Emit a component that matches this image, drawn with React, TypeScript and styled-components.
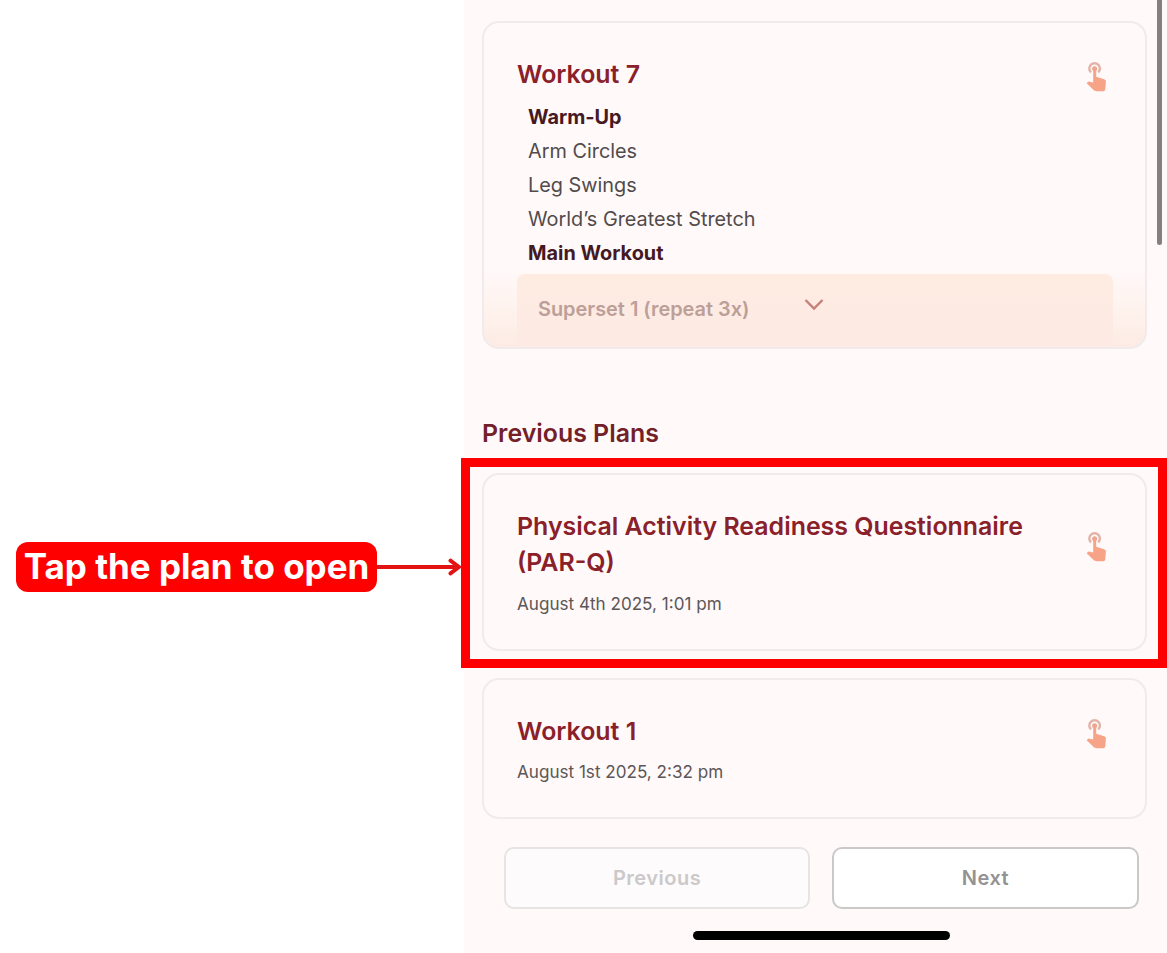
import type { ReactNode } from 'react';

import styled, { createGlobalStyle } from 'styled-components';

const exercises = ['Arm Circles', 'Leg Swings', 'World’s Greatest Stretch'];

const TouchIcon = () => (
  <svg width="24" height="34" viewBox="0 0 24 34" fill="none">
    <path
      d="M6 12.4A5.3 5.3 0 1 1 13.2 12.4"
      stroke="#e2b3a6"
      strokeWidth="2.4"
    />
    <circle cx="9.6" cy="8.8" r="2.5" fill="#e5a593" />
    <path
      d="M8.2 8.5c0-1 .6-1.6 1.5-1.6s1.5.6 1.5 1.6v8.2l8 2.6c1.2.4 1.8 1.2 1.7 2.4l-.6 7.2c-.2 1.6-1 2.4-2.5 2.4h-6.3c-1.2 0-2-.4-2.8-1.2L1.6 23.2l1-1c.6-.6 1.3-.7 2.1-.5l3.5.9z"
      fill="#f7a388"
    />
  </svg>
);

type PlanCardProps = {
  title: ReactNode;
  date: string;
  height: number;
  dateGap: number;
  iconOffset: number;
};

const PlanCard = ({
  title,
  date,
  height,
  dateGap,
  iconOffset,
}: PlanCardProps) => (
  <Card $height={height}>
    <CardContent>
      <CardTitle>{title}</CardTitle>
      <PlanDate $gap={dateGap}>{date}</PlanDate>
    </CardContent>
    <IconSlot $offset={iconOffset}>
      <TouchIcon />
    </IconSlot>
  </Card>
);

const App = () => {
  return (
    <Page>
      <GlobalStyle />
      <Annotation>
        <Callout>Tap the plan to open</Callout>
        <Arrow width="84" height="18" viewBox="0 0 84 18" fill="none">
          <path
            d="M0 9H82M73.5 2.7L82 9L73.5 15.3"
            stroke="#e31313"
            strokeWidth="4"
            strokeLinecap="round"
            strokeLinejoin="round"
          />
        </Arrow>
      </Annotation>
      <Screen>
        <ScrollThumb />
        <Card $height={328} $faded>
          <CardContent>
            <CardTitle>Workout 7</CardTitle>
            <ExerciseList>
              <SectionName>Warm-Up</SectionName>
              {exercises.map((name) => (
                <Exercise key={name}>{name}</Exercise>
              ))}
              <SectionName>Main Workout</SectionName>
            </ExerciseList>
            <Superset>
              <span>Superset 1 (repeat 3x)</span>
              <Chevron width="22" height="14" viewBox="0 0 22 14" fill="none">
                <path
                  d="M2.5 2L11 10.5L19.5 2"
                  stroke="#c58078"
                  strokeWidth="2.4"
                />
              </Chevron>
            </Superset>
          </CardContent>
          <IconSlot $offset={4}>
            <TouchIcon />
          </IconSlot>
        </Card>

        <Heading>Previous Plans</Heading>
        <Highlighted>
          <PlanCard
            title={
              <>
                Physical Activity Readiness Questionnaire
                <br />
                (PAR-Q)
              </>
            }
            date="August 4th 2025, 1:01 pm"
            height={178}
            dateGap={12}
            iconOffset={22}
          />
          <HighlightFrame />
        </Highlighted>
        <PlanCard
          title="Workout 1"
          date="August 1st 2025, 2:32 pm"
          height={141}
          dateGap={11}
          iconOffset={4}
        />
        <Pagination>
          <PageButton $disabled>Previous</PageButton>
          <PageButton>Next</PageButton>
        </Pagination>
        <HomeIndicator />
      </Screen>
    </Page>
  );
};

export default App;

// region STYLES

const GlobalStyle = createGlobalStyle`
  * {
    box-sizing: border-box;
  }

  body {
    margin: 0;
    background: #ffffff;
    font-family: Inter, 'Liberation Sans', sans-serif;
    overflow: hidden;
  }
`;

const Page = styled.div`
  display: flex;
  width: 1167px;
  height: 953px;
  overflow: hidden;
`;

const Annotation = styled.div`
  display: flex;
  flex: 0 0 464px;
  align-items: flex-start;
  padding: 542px 0 0 16px;
`;

const Callout = styled.div`
  display: flex;
  align-items: center;
  justify-content: center;
  flex: 0 0 361px;
  height: 50px;
  padding-bottom: 2px;
  border-radius: 12px;
  background: #ff0000;
  color: #ffffff;
  font-size: 35px;
  font-weight: 700;
  white-space: nowrap;
`;

const Arrow = styled.svg`
  flex: none;
  margin-top: 16px;
`;

const Screen = styled.main`
  position: relative;
  flex: 0 0 703px;
  min-width: 0;
  display: flex;
  flex-direction: column;
  padding: 21px 20px 0 18px;
  background: #fff9f9;
`;

const ScrollThumb = styled.div`
  position: absolute;
  top: 0;
  right: 5px;
  width: 5px;
  height: 245px;
  border-radius: 0 0 3px 3px;
  background: #858080;
`;

const Card = styled.section<{ $height: number; $faded?: boolean }>`
  display: flex;
  flex: none;
  justify-content: space-between;
  height: ${({ $height }) => $height}px;
  padding: 33px 36px 0 33px;
  border: 2px solid #f1ebeb;
  border-radius: 17px;
  overflow: hidden;
  background: ${({ $faded }) =>
    $faded
      ? 'linear-gradient(to bottom, #fff9f9 245px, #fef1eb 295px, #fdeae4 100%)'
      : '#fff9f9'};
`;

const CardContent = styled.div`
  width: 596px;
  margin-right: -28px;
  flex: none;
`;

const CardTitle = styled.h2`
  margin: 0;
  color: #8a2029;
  font-size: 24.9px;
  font-weight: 600;
  line-height: 36px;
  white-space: nowrap;
`;

const IconSlot = styled.div<{ $offset: number }>`
  flex: none;
  height: 34px;
  margin-top: ${({ $offset }) => $offset}px;
`;

const ExerciseList = styled.div`
  padding: 8px 0 0 11px;
`;

const Exercise = styled.div`
  color: #514b4c;
  font-size: 19.85px;
  line-height: 34px;
`;

const SectionName = styled(Exercise)`
  color: #451923;
  font-weight: 700;
`;

const Superset = styled.div`
  display: flex;
  align-items: flex-start;
  justify-content: space-between;
  height: 74px;
  margin-top: 4px;
  padding: 23px 288px 0 21px;
  border-radius: 8px 8px 0 0;
  background: linear-gradient(to bottom, #feebe1, #fdeae4);
  color: #bd9f99;
  font-size: 19.9px;
  font-weight: 600;
  line-height: 24px;
  white-space: nowrap;
`;

const Chevron = styled.svg`
  margin-top: 1px;
`;

const Heading = styled.h1`
  margin: 66px 0 22px;
  color: #732029;
  font-size: 24.9px;
  font-weight: 600;
  line-height: 36px;
`;

const Highlighted = styled.div`
  position: relative;
  margin-bottom: 27px;
`;

const HighlightFrame = styled.div`
  position: absolute;
  top: -15px;
  right: -20px;
  bottom: -17px;
  left: -21px;
  border: 9px solid #ff0000;
`;

const PlanDate = styled.p<{ $gap: number }>`
  margin: ${({ $gap }) => $gap}px 0 0;
  color: #5c5657;
  font-size: 17.1px;
  line-height: 24px;
`;

const Pagination = styled.div`
  display: grid;
  grid-template-columns: 306px 307px;
  gap: 22px;
  margin: 28px 0 0 22px;
`;

const PageButton = styled.button<{ $disabled?: boolean }>`
  height: 62px;
  padding: 0;
  border: 2px solid ${({ $disabled }) => ($disabled ? '#e6e4e4' : '#cac8c8')};
  border-radius: 10px;
  background: ${({ $disabled }) => ($disabled ? '#fdfbfb' : '#ffffff')};
  color: ${({ $disabled }) => ($disabled ? '#cbc9ca' : '#949293')};
  font-family: inherit;
  font-size: 20px;
  font-weight: 600;
  letter-spacing: 0.5px;
`;

const HomeIndicator = styled.div`
  width: 257px;
  height: 9px;
  margin: 22px 0 0 211px;
  border-radius: 5px;
  background: #000000;
`;

// endregion
